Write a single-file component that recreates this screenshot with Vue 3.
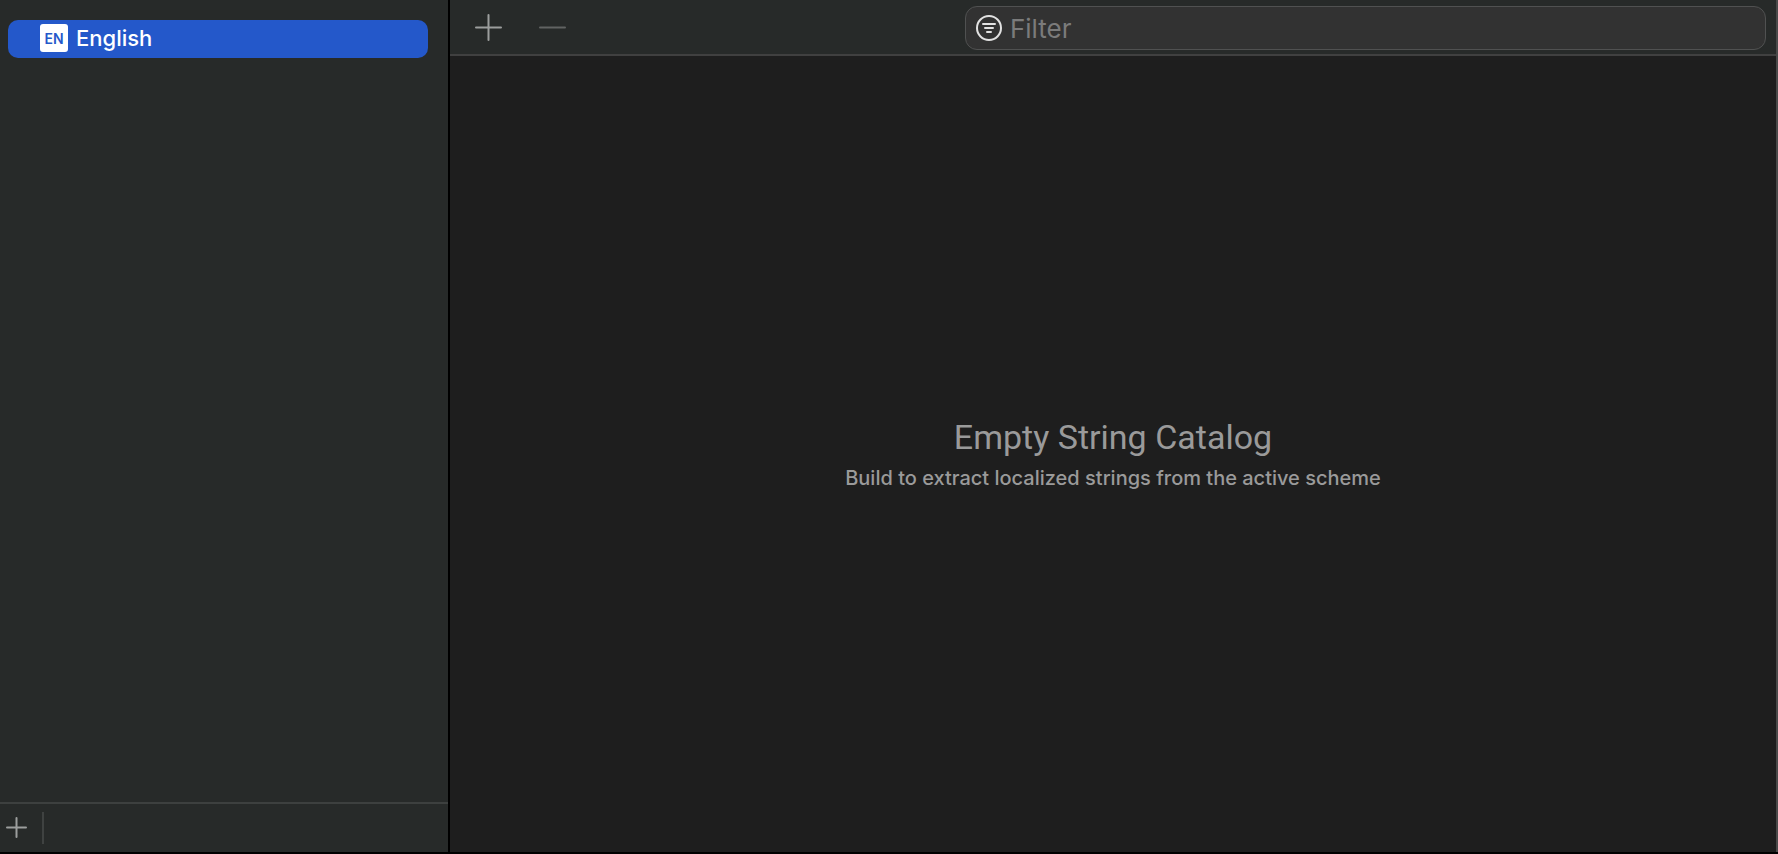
<template>
  <div class="catalog-editor">
    <aside class="sidebar">
      <ul class="language-list">
        <li v-for="lang in languages" :key="lang.code">
          <button
            class="language"
            :class="{ selected: lang.code === selected }"
            @click="selected = lang.code"
          >
            <span class="badge">{{ lang.code }}</span>
            <span>{{ lang.name }}</span>
          </button>
        </li>
      </ul>
      <footer class="sidebar-footer">
        <button class="icon-button" aria-label="Add language">
          <svg width="22" height="22" viewBox="0 0 22 22">
            <path d="M1 10.5H20M10.5 1V20" />
          </svg>
        </button>
        <span class="separator"></span>
      </footer>
    </aside>

    <main class="content">
      <header class="toolbar">
        <div class="actions">
          <button class="icon-button" aria-label="Add string">
            <svg width="28" height="28" viewBox="0 0 28 28">
              <path d="M2 13.5H27M14.5 1V26" />
            </svg>
          </button>
          <button class="icon-button" aria-label="Remove string" disabled>
            <svg width="28" height="28" viewBox="0 0 28 28">
              <path d="M2 13.5H27" />
            </svg>
          </button>
        </div>
        <label class="filter">
          <svg width="26" height="26" viewBox="0 0 26 26">
            <circle cx="13" cy="13" r="12" />
            <path d="M7 9H19M9 13H17M11 17H15" />
          </svg>
          <input v-model="filter" type="text" placeholder="Filter" aria-label="Filter" />
        </label>
      </header>
      <section class="empty-state">
        <h1>Empty String Catalog</h1>
        <p>Build to extract localized strings from the active scheme</p>
      </section>
    </main>
  </div>
</template>

<script setup>
import { ref } from 'vue'

const languages = [{ code: 'EN', name: 'English' }]

const selected = ref('EN')
const filter = ref('')
</script>

<style>
body {
  margin: 0;
  background: #000;
}
</style>

<style scoped>
.catalog-editor {
  display: flex;
  box-sizing: border-box;
  min-height: 100vh;
  border-bottom: 2px solid #000;
  background: #1e1e1e;
  font-family: Inter, 'Liberation Sans', sans-serif;
}

.sidebar {
  display: flex;
  flex-direction: column;
  flex: 0 0 448px;
  background: #272a29;
  border-right: 2px solid #000;
}

.language-list {
  flex: 1;
  margin: 0;
  padding: 20px 20px 20px 8px;
  list-style: none;
}

.language {
  display: flex;
  align-items: center;
  gap: 8px;
  box-sizing: border-box;
  width: 100%;
  height: 38px;
  padding: 0 32px 2px;
  border: none;
  border-radius: 10px;
  background: transparent;
  color: #fff;
  font-family: inherit;
  font-size: 22px;
  font-weight: 500;
  line-height: 28px;
  text-align: left;
}

.language.selected {
  background: #2458ca;
}

.badge {
  width: 28px;
  height: 28px;
  border-radius: 3px;
  background: #fff;
  color: #2458ca;
  font-size: 14px;
  font-weight: 600;
  line-height: 30px;
  text-align: center;
}

.sidebar-footer {
  display: flex;
  align-items: center;
  gap: 14px;
  height: 48px;
  padding: 0 6px;
  border-top: 2px solid #3d403f;
}

.separator {
  width: 2px;
  height: 32px;
  background: #3f4241;
}

.icon-button {
  display: flex;
  padding: 0;
  border: none;
  background: transparent;
  color: #9c9e9d;
}

.icon-button:disabled {
  color: #616362;
}

svg {
  flex: none;
  fill: none;
  stroke: currentColor;
  stroke-width: 2;
  stroke-linecap: round;
}

.content {
  display: flex;
  flex-direction: column;
  flex: 1;
  border-right: 2px solid #4a4a4a;
}

.toolbar {
  display: flex;
  align-items: center;
  justify-content: space-between;
  box-sizing: border-box;
  height: 56px;
  padding: 2px 10px 0 24px;
  background: #272a29;
  border-bottom: 2px solid #404040;
}

.actions {
  display: flex;
  gap: 36px;
}

.filter {
  display: flex;
  align-items: center;
  gap: 8px;
  box-sizing: border-box;
  width: 62%;
  height: 44px;
  padding: 0 10px;
  border: 1px solid #505151;
  border-radius: 12px;
  background: #323232;
  color: #e2e2e2;
}

.filter input {
  flex: 1;
  min-width: 0;
  padding: 0;
  border: none;
  outline: none;
  background: transparent;
  color: #e2e2e2;
  font-family: inherit;
  font-size: 26px;
}

.filter input::placeholder {
  color: #7b7b7b;
  opacity: 1;
}

.empty-state {
  display: flex;
  flex-direction: column;
  align-items: center;
  justify-content: center;
  flex: 1;
  padding-top: 4px;
  color: #9a9a9a;
  text-align: center;
}

.empty-state h1 {
  margin: 0;
  font-family: Roboto, 'Liberation Sans', sans-serif;
  font-size: 34px;
  font-weight: 400;
  line-height: 44px;
}

.empty-state p {
  margin: 0;
  font-size: 20px;
  font-weight: 500;
  line-height: 38px;
}
</style>
